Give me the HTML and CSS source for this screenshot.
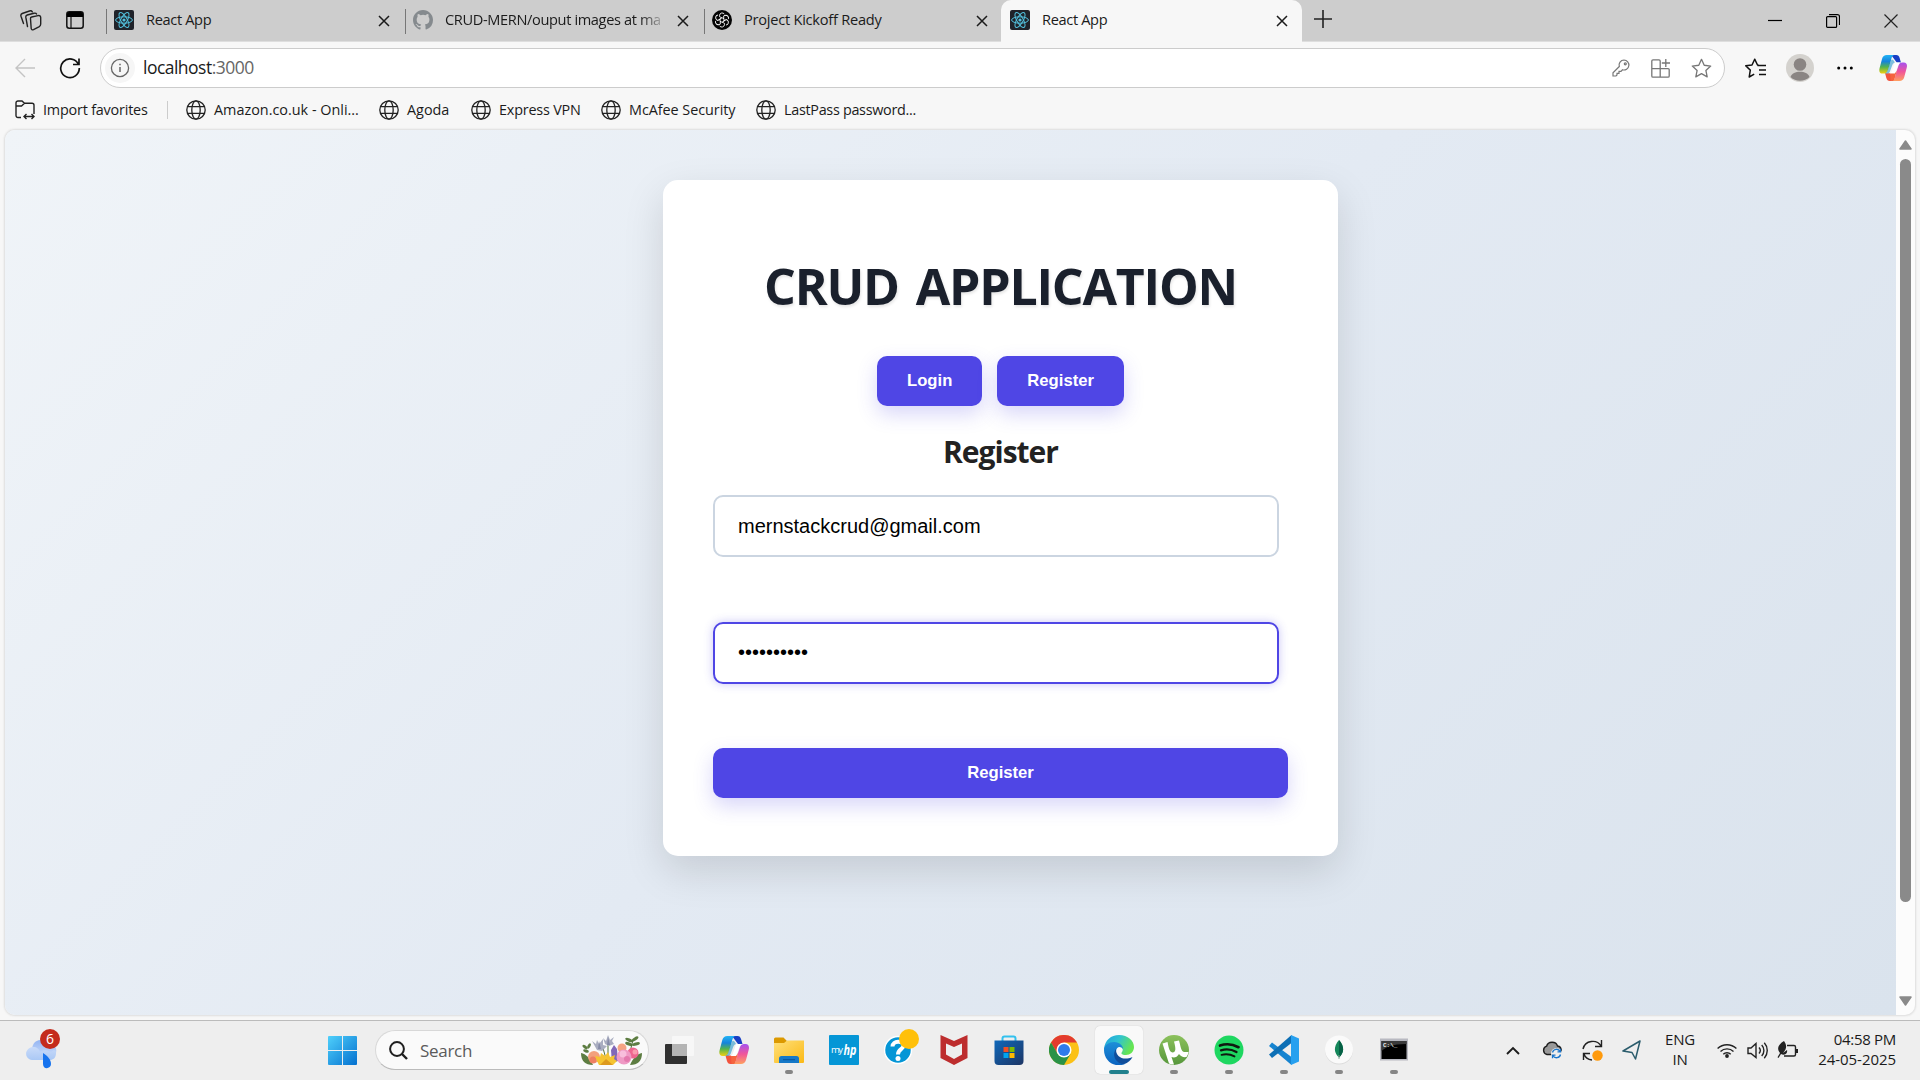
FILE: index.html
```html
<!DOCTYPE html>
<html lang="en">
<head>
<meta charset="utf-8">
<title>React App</title>
<link rel="stylesheet" href="styles.css">
</head>
<body>
<svg class="defs" width="0" height="0">
  <defs>
    <linearGradient id="cpA" x1="0" y1="0" x2="0" y2="1"><stop offset="0" stop-color="#22b4f5"/><stop offset=".35" stop-color="#1583dc"/><stop offset=".65" stop-color="#53b44c"/><stop offset="1" stop-color="#f5cf10"/></linearGradient>
    <linearGradient id="cpB" x1="0" y1="0" x2="0" y2="1"><stop offset="0" stop-color="#a550f0"/><stop offset=".5" stop-color="#f0559a"/><stop offset="1" stop-color="#ffa060"/></linearGradient>
    <linearGradient id="win" gradientUnits="userSpaceOnUse" x1="0" y1="0" x2="29" y2="29"><stop offset="0" stop-color="#4fd0fb"/><stop offset="1" stop-color="#0470cf"/></linearGradient>
    <linearGradient id="fold" x1="0" y1="0" x2="1" y2="1"><stop offset="0" stop-color="#ffe07a"/><stop offset="1" stop-color="#fbb915"/></linearGradient>
    <linearGradient id="store" x1="0" y1="0" x2="1" y2="1"><stop offset="0" stop-color="#0f68ba"/><stop offset="1" stop-color="#1d3564"/></linearGradient>
    <linearGradient id="edA" x1="0" y1="0" x2="1" y2=".4"><stop offset="0" stop-color="#1f9fe0"/><stop offset=".5" stop-color="#30c3d0"/><stop offset="1" stop-color="#66e552"/></linearGradient>
    <linearGradient id="edB" x1="0" y1="0" x2="0" y2="1"><stop offset="0" stop-color="#1d8fd8"/><stop offset="1" stop-color="#0b63c0"/></linearGradient>
    <linearGradient id="cloud" x1="0" y1="0" x2="0" y2="1"><stop offset="0" stop-color="#94b5f2"/><stop offset="1" stop-color="#cfe0fb"/></linearGradient>
    <linearGradient id="cloud2" x1="0" y1="0" x2="0" y2="1"><stop offset="0" stop-color="#c9dbf9"/><stop offset="1" stop-color="#aac8f5"/></linearGradient>
    <linearGradient id="ut" x1="0" y1="0" x2="0" y2="1"><stop offset="0" stop-color="#8cc15c"/><stop offset="1" stop-color="#57973c"/></linearGradient>
    <symbol id="react" viewBox="0 0 20 20"><rect width="20" height="20" rx="2" fill="#20232a"/><g fill="none" stroke="#53c1de" stroke-width="1"><ellipse cx="10" cy="10" rx="8.4" ry="3.2"/><ellipse cx="10" cy="10" rx="8.4" ry="3.2" transform="rotate(60 10 10)"/><ellipse cx="10" cy="10" rx="8.4" ry="3.2" transform="rotate(120 10 10)"/></g><circle cx="10" cy="10" r="1.6" fill="#53c1de"/></symbol>
    <symbol id="x" viewBox="0 0 12 12"><path d="M1 1l10 10M11 1L1 11" fill="none" stroke="#1b1b1b" stroke-width="1.5"/></symbol>
    <symbol id="globe" viewBox="0 0 20 20"><g fill="none" stroke="#222" stroke-width="1.3"><circle cx="10" cy="10" r="9.2"/><ellipse cx="10" cy="10" rx="4.2" ry="9.2"/><path d="M1.5 6.6h17M1.5 13.4h17"/></g></symbol>
    <symbol id="copilot" viewBox="0 0 30 28"><path d="M13 0h5.500c2 0 3 1 3.700 3.500L23.500 8H19z" fill="#183fc4"/><path d="M17 28h-5.500c-2 0-3-1-3.700-3.500L6.500 19.500H12z" fill="#f2533d"/><path d="M8 0h8.500c-2 0-2.800 1.600-3.400 3.500L11 11l-2 6c-.8 2-2 3-4 3H3.500C.3 20-.5 17.300.3 14.200L3 4C3.800 1.200 5.500 0 8 0z" transform="translate(.3 0)" fill="url(#cpA)"/><path d="M11 11l1.500-4C13.700 3.500 15 4.500 17 8c-1.500.4-2.500 1.800-3.200 4l-2 5.500c-.6 1.600-1.500 2.400-3 2.500H5c2 0 3.200-1 4-3z" fill="#1a91c8" opacity=".55"/><path d="M22 28h-8.500c2 0 2.800-1.600 3.400-3.500L19 17l2-6c.8-2 2-3 4-3h1.500c3.200 0 4 2.700 3.200 5.800L27 24c-.8 2.800-2.500 4-5 4z" fill="url(#cpB)"/><path d="M17.500 8H24c-2 0-3 1.300-3.800 3.500L17.500 19l-1 1H11c1.500 0 2.300-1 3-3l2-5.500C16.700 9.200 16.500 8.500 17.500 8z" fill="#fff"/><path d="M12 20h5l2-3-2 7.500c-.6 1.900-1.400 3.500-3.400 3.500-2 0-1-5-1.600-8z" fill="#f5643f"/></symbol>
  </defs>
</svg>
<div class="screen">
  <header class="tabbar">
    <div class="tab-tools">
      <svg width="22" height="21" viewBox="0 0 22 21"><g fill="none" stroke="#222" stroke-width="1.400" stroke-linejoin="round" stroke-linecap="round"><path d="M10.500 8.700Q10.300 7.300 11.700 7L18 5.600Q20.600 5.200 20.700 7.500V14Q20.700 15.700 19.300 16.600L13.500 19.600Q11.500 20.400 11.200 18.500z"/><path d="M7.500 16.500L5.800 7.200Q5.600 5.500 7.200 5L14 3.200Q16 2.800 16.600 4M3.500 13.500L1 6.200Q.4 4.200 2.200 3.500L9.500 1Q11.500.4 12.300 1.800"/></g></svg>
      <svg width="18" height="18" viewBox="0 0 18 18"><rect x=".8" y=".8" width="16.400" height="16.400" rx="2.500" fill="none" stroke="#111" stroke-width="1.500"/><path d="M1 6V3a2 2 0 012-2h12a2 2 0 012 2v3z" fill="#000"/><path d="M5 6v11" stroke="#111" stroke-width="1.200"/></svg>
    </div>
    <div class="tab"><svg class="fav"><use href="#react"/></svg><span class="tab-title">React App</span><svg class="close"><use href="#x"/></svg></div>
    <div class="tab"><svg class="fav" viewBox="0 0 16 16"><path fill="#858a8e" d="M8 0C3.580 0 0 3.580 0 8c0 3.540 2.290 6.530 5.470 7.590.4.070.55-.17.55-.38v-1.490c-2.010.37-2.530-.49-2.690-.94-.09-.23-.48-.94-.82-1.130-.28-.15-.68-.52-.01-.53.63-.01 1.080.58 1.230.82.720 1.210 1.870.87 2.330.66.070-.52.28-.87.510-1.070-1.780-.2-3.640-.89-3.640-3.950 0-.87.310-1.590.820-2.150-.08-.2-.36-1.020.08-2.120 0 0 .67-.21 2.200.82a7.600 7.600 0 014 0c1.530-1.040 2.200-.82 2.200-.82.440 1.100.160 1.920.080 2.120.510.560.820 1.270.820 2.150 0 3.070-1.870 3.750-3.650 3.950.290.250.540.730.540 1.480v2.190c0 .210.150.460.550.380A8.010 8.010 0 0016 8c0-4.420-3.580-8-8-8z"/></svg><span class="tab-title fade">CRUD-MERN/ouput images at ma</span><svg class="close"><use href="#x"/></svg></div>
    <div class="tab last"><svg class="fav" viewBox="0 0 20 20"><circle cx="10" cy="10" r="10" fill="#050505"/><g fill="none" stroke="#fff" stroke-width=".9"><g id="knot"><path id="k" d="M10 8L7.500 6.600V5.300a2.700 2.700 0 014.800-1.300"/><use href="#k" transform="rotate(60 10 10)"/><use href="#k" transform="rotate(120 10 10)"/></g><use href="#knot" transform="rotate(180 10 10)"/><path d="M10 7.700l2 1.150v2.300l-2 1.150-2-1.150v-2.300z"/></g></svg><span class="tab-title">Project Kickoff Ready</span><svg class="close"><use href="#x"/></svg></div>
    <div class="tab active"><svg class="fav"><use href="#react"/></svg><span class="tab-title">React App</span><svg class="close"><use href="#x"/></svg></div>
    <svg class="plus" width="18" height="18" viewBox="0 0 18 18"><path d="M9 0v18M0 9h18" stroke="#222" stroke-width="1.600"/></svg>
    <div class="window-controls">
      <svg width="14" height="14" viewBox="0 0 14 14"><path d="M0 6.500h14" stroke="#000" stroke-width="1.200"/></svg>
      <svg width="14" height="14" viewBox="0 0 14 14"><path d="M.6 3.600a1 1 0 011-1h8a1 1 0 011 1v8.800a1 1 0 01-1 1h-8a1 1 0 01-1-1zM3 .7h8.500a2 2 0 012 2V11" fill="none" stroke="#000" stroke-width="1.200"/></svg>
      <svg width="14" height="14" viewBox="0 0 14 14"><path d="M.5.5l13 13M13.500.5l-13 13" stroke="#222" stroke-width="1.200"/></svg>
    </div>
  </header>
  <nav class="toolbar">
    <svg class="back" width="20" height="20" viewBox="0 0 20 20"><path d="M20 10H1M10 1l-9 9 9 9" fill="none" stroke="#c4c4c4" stroke-width="1.400"/></svg>
    <svg class="reload" width="22" height="22" viewBox="0 0 22 22"><path d="M19.500 7.500A9.300 9.300 0 1020.300 11M20 1.500v6h-6" fill="none" stroke="#111" stroke-width="1.700"/></svg>
    <div class="address">
      <span class="info"><svg width="20" height="20" viewBox="0 0 20 20"><circle cx="10" cy="10" r="8.600" fill="none" stroke="#666" stroke-width="1.300"/><path d="M10 9v5M10 5.700v1.600" stroke="#666" stroke-width="1.500"/></svg></span>
      <span class="url">localhost<span class="port">:3000</span></span>
      <div class="address-icons">
        <svg width="18" height="18" viewBox="0 0 18 18" fill="none" stroke="#777" stroke-width="1.200"><path d="M12 1a5 5 0 11-1.500 9.800L9 12.300H7v2H5V16l-1 1H1v-3.200l6.300-6.300A5 5 0 0112 1z"/><circle cx="13.300" cy="4.800" r="1"/></svg>
        <svg width="19" height="19" viewBox="0 0 19 19" fill="none" stroke="#777" stroke-width="1.300"><path d="M9 18.200H2a1.200 1.200 0 01-1.200-1.200V2A1.200 1.200 0 012 .8h6A1.200 1.200 0 019.200 2v16.200H17a1.200 1.200 0 001.200-1.200v-6A1.200 1.200 0 0017 9.600H.8M14.800 0v8M10.800 4H19"/></svg>
        <svg width="21" height="21" viewBox="0 0 24 24" fill="none" stroke="#777" stroke-width="1.500" stroke-linejoin="round"><path d="M12 1.500l3.100 6.800 7.400.9-5.500 5 1.500 7.300-6.500-3.700-6.500 3.700L7 14.200l-5.500-5 7.400-.9z"/></svg>
      </div>
    </div>
    <div class="browser-icons">
      <svg width="21" height="21" viewBox="0 0 21 21" fill="none" stroke="#111" stroke-width="1.500" stroke-linejoin="round"><path d="M13.500 7h-1L9.700 1.200 7 7l-6.300.8 4.600 4.300L4.200 19l5-2.800M12.500 7.500H21M14 12h7M14 16.500h7"/></svg>
      <svg width="28" height="28" viewBox="0 0 28 28"><circle cx="14" cy="14" r="14" fill="#d4d2ce"/><circle cx="14" cy="10.500" r="6.300" fill="#8a8583"/><path d="M4.500 23c2-7 17-7 19 0a14 14 0 01-19 0z" fill="#8a8583"/></svg>
      <svg width="16" height="4" viewBox="0 0 16 4"><circle cx="1.700" cy="2" r="1.500"/><circle cx="8" cy="2" r="1.500"/><circle cx="14.300" cy="2" r="1.500"/></svg>
      <svg width="28" height="28"><use href="#copilot"/></svg>
    </div>
  </nav>
  <nav class="bookmarks">
    <a class="bm import"><svg width="20" height="20" viewBox="0 0 20 20" fill="none" stroke="#222" stroke-width="1.400"><path d="M6 17.500H3A2 2 0 011 15.500V3a2 2 0 012-2h4l2.500 2.300H17a2 2 0 012 2V14M1 6h5.500l3-2.700M9 16.500h10M11.500 14L9 16.500l2.500 2.500M16.500 14l2.500 2.500-2.500 2.500"/></svg><span>Import favorites</span></a>
    <a class="bm amazon"><svg width="20" height="20"><use href="#globe"/></svg><span>Amazon.co.uk - Onli...</span></a>
    <a class="bm agoda"><svg width="20" height="20"><use href="#globe"/></svg><span>Agoda</span></a>
    <a class="bm express"><svg width="20" height="20"><use href="#globe"/></svg><span>Express VPN</span></a>
    <a class="bm mcafee"><svg width="20" height="20"><use href="#globe"/></svg><span>McAfee Security</span></a>
    <a class="bm lastpass"><svg width="20" height="20"><use href="#globe"/></svg><span>LastPass password...</span></a>
  </nav>
  <div class="viewport">
    <main class="page">
      <section class="card">
        <h1>CRUD APPLICATION</h1>
        <div class="switch"><button class="btn">Login</button><button class="btn">Register</button></div>
        <h2>Register</h2>
        <div class="field">mernstackcrud@gmail.com</div>
        <div class="field focused">••••••••••</div>
        <button class="btn wide">Register</button>
      </section>
    </main>
    <div class="scrollbar">
      <svg width="13" height="10" viewBox="0 0 13 10"><path d="M6.500 1L12 9H1z" fill="#8a8a8a" stroke="#8a8a8a" stroke-width="1.500" stroke-linejoin="round"/></svg>
      <div class="thumb"></div>
      <svg width="13" height="10" viewBox="0 0 13 10"><path d="M6.500 9L12 1H1z" fill="#8a8a8a" stroke="#8a8a8a" stroke-width="1.500" stroke-linejoin="round"/></svg>
    </div>
  </div>
  <footer class="taskbar">
    <div class="weather"><svg width="36" height="40" viewBox="0 0 36 40"><path d="M8 26C4 12 14 8 19 11c4-1 7 3 7 5 5-1 6 4 5 7s-3 5-6 5z" fill="url(#cloud)"/><path d="M7 30c-8-1-8-12 1-13 4 0 6 2 7 5 4-3 9-2 11 1 1-3 5-4 5 0 0 5-3 7-6 7z" fill="url(#cloud2)"/><path d="M18 23c5 3 8 7 8 11 0 5-8 6-8 0z" fill="#1673ee"/></svg><span class="badge">6</span></div>
    <svg class="start" width="29" height="29" viewBox="0 0 29 29"><path d="M1 0h13v14H0V1a1 1 0 011-1zM15 0h13a1 1 0 011 1v13H15zM0 15h14v14H1a1 1 0 01-1-1zM15 15h14v13a1 1 0 01-1 1H15z" fill="url(#win)"/></svg>
    <div class="search">
      <svg width="19" height="19" viewBox="0 0 19 19"><circle cx="8" cy="8" r="6.900" fill="none" stroke="#1f1f1f" stroke-width="2"/><path d="M13 13l5 5" stroke="#1f1f1f" stroke-width="2.400"/></svg>
      <span>Search</span>
      <svg class="flowers" width="61" height="31" viewBox="0 0 61 31">
        <g fill="#5d7d42"><path d="M0 18c5 1 9 5 12 12C4 30 0 26 0 18zM61 18c-5 1-9 5-12 12 8 0 12-4 12-12z"/><ellipse cx="4" cy="12" rx="3" ry="1.500" transform="rotate(35 4 12)"/><ellipse cx="8" cy="11" rx="3" ry="1.400" transform="rotate(-60 8 11)"/><ellipse cx="5" cy="16" rx="3" ry="1.500" transform="rotate(20 5 16)"/><ellipse cx="48" cy="5" rx="4" ry="1.600" transform="rotate(25 48 5)"/><ellipse cx="54" cy="4" rx="4" ry="1.600" transform="rotate(-35 54 4)"/><ellipse cx="55" cy="9" rx="4" ry="1.600" transform="rotate(-15 55 9)"/><ellipse cx="48" cy="9" rx="4" ry="1.600" transform="rotate(20 48 9)"/></g>
        <path d="M22 13l3 11M27 9v12M52 5l-3 12" stroke="#51743c" fill="none"/>
        <path d="M11 6l4 3 1-4 2 4 4-5v6l4 1-5 5-5-1zM22 3l3 3 2-6 2 5 4-3-2 4 2 3-5 2-4-2z" fill="#a9adc0"/><path d="M17 14l1-8 2 8zM26 10l1-8 2 8z" fill="#858aa6"/>
        <circle cx="13" cy="22" r="6" fill="#f3a07c"/><circle cx="12" cy="25" r="3.500" fill="#ee7f62"/><circle cx="41" cy="13" r="4.500" fill="#f5a383"/><circle cx="52" cy="18" r="5.500" fill="#ef668f"/><circle cx="54" cy="17" r="2.500" fill="#fa9cae"/>
        <path d="M30 15l3-5 3 4 1 12-6 2z" fill="#8168b8"/><circle cx="43" cy="22" r="7.500" fill="#ef9ac5"/><circle cx="42" cy="19" r="3.500" fill="#f8bedc"/><circle cx="46" cy="24" r="3" fill="#e479ae"/>
        <path d="M14 21l5 1 1-4 4 3 3-4 2 5 5-2-1 4 3 2-4 4H18l-2-4z" fill="#f5c431"/><path d="M19 30l6-6 7 6z" fill="#dd9a1e"/>
      </svg>
    </div>
    <div class="apps">
      <div class="app"><svg viewBox="0 0 30 30"><rect x="1" y="9" width="22" height="20" rx="1" fill="#303030"/><rect x="8" y="1" width="22" height="20" rx="1" fill="#f7f7f7"/><path d="M8 9h15v12H8z" fill="#b4b4b4"/></svg></div>
      <div class="app"><svg viewBox="0 0 30 30"><use href="#copilot" y="1" width="30" height="28"/></svg></div>
      <div class="app run"><svg viewBox="0 0 30 30"><path d="M0 4a1.500 1.500 0 011.500-1.500h8L13 6h10v6H0z" fill="#dc9900"/><path d="M0 8h10l3-2.500h17V27a1 1 0 01-1 1H1a1 1 0 01-1-1z" fill="url(#fold)"/><path d="M5 28v-4.500a2.500 2.500 0 012.500-2.500h15a2.500 2.500 0 012.500 2.500V28z" fill="#1679c8"/><path d="M9 24.700h12" stroke="#08529a"/></svg></div>
      <div class="app"><svg viewBox="0 0 30 30"><rect width="30" height="30" rx="1" fill="#0596d6"/><text x="2" y="18" font-family="Open Sans,sans-serif" font-size="9.500" fill="#fff" textLength="12">my</text><text x="14.500" y="20" font-family="Open Sans,sans-serif" font-weight="700" font-style="italic" font-size="14" fill="#fff" textLength="13" lengthAdjust="spacingAndGlyphs">hp</text></svg></div>
      <div class="app"><svg viewBox="0 0 30 30"><circle cx="14" cy="15" r="13.500" fill="#0596d6" stroke="#fff" stroke-width="1.500"/><path d="M8.500 11.500c0-6 11-6.500 11-1 0 4-5.500 3.500-5.500 9" fill="none" stroke="#fff" stroke-width="4"/><circle cx="14" cy="23.500" r="2.500" fill="#fff"/></svg><span class="dot"></span></div>
      <div class="app"><svg viewBox="0 0 30 30"><path d="M1.500 0L15 6 28.500 0v23L15 30 1.500 23z" fill="#bd2d2e"/><path d="M7 8.500l8 3.500 8-3.500v11L15 24l-8-4.500z" fill="#eee"/></svg></div>
      <div class="app"><svg viewBox="0 0 30 30"><path d="M8.500 6V3.500a2 2 0 012-2h9a2 2 0 012 2V6" fill="none" stroke="#32c1ee" stroke-width="2"/><path d="M.5 5.500h29V26a4 4 0 01-4 4h-21a4 4 0 01-4-4z" fill="url(#store)"/><path d="M9.500 12h5v5h-5z" fill="#f25022"/><path d="M15.500 12h5v5h-5z" fill="#7fba00"/><path d="M9.500 18h5v5h-5z" fill="#00a4ef"/><path d="M15.500 18h5v5h-5z" fill="#ffb900"/></svg></div>
      <div class="app"><svg viewBox="0 0 30 30"><circle cx="15" cy="15" r="15" fill="#fbc116"/><path d="M2 7.500A15 15 0 0128 7.500H15l-6.500 11z" fill="#e33b2e"/><path d="M2 7.500l6.500 11L15 22l6.500-3L15 30A15 15 0 012 7.500z" fill="#2a9247"/><circle cx="15" cy="15" r="7.500" fill="#fff"/><circle cx="15" cy="15" r="6" fill="#2f7bea"/></svg></div>
      <div class="app current"><svg viewBox="0 0 30 30"><path d="M0 14C1 5 7 0 15 0c9 0 15 6 15 12 0 5-4 8-8 8-5 0-5-2-4-3 2-3 0-6-4-6-6 0-7 6-7 6z" fill="url(#edA)"/><path d="M0 15c0-5 5-8 10-8 6 0 9 4 9 7-2-3-7-3-7 3 0 7 5 12 10 11.500C11 34 0 26 0 15z" fill="url(#edB)"/><path d="M12 14c-5 7 1 15 8 15 4-1 7-4 8.500-7-9 4-17 0-16.500-8z" fill="#104e9b"/></svg></div>
      <div class="app run"><svg viewBox="0 0 30 30"><circle cx="15" cy="15" r="15" fill="url(#ut)"/><path d="M3.500 8.500L8.500 7c1 4 1.500 10 5 10.500 3.500 0 3.500-4 1.500-11L20 5.500c1.500 5 2 11 5 11.500h4.500c-.3 2-1 3.500-2 5-3 .5-6-.5-7.500-3-2 3.500-5 4-7.500 3l2.500 7.500c-2 .2-3.500-.2-5-1z" fill="#fff"/></svg></div>
      <div class="app run"><svg viewBox="0 0 30 30"><circle cx="15" cy="15" r="14.500" fill="#1ed760"/><g fill="none" stroke="#101810" stroke-linecap="round"><path d="M6 10.500c6-2 13-1.300 18.500 1.700" stroke-width="2.700"/><path d="M7 15.300c5.500-1.600 11-.8 15.500 1.700" stroke-width="2.300"/><path d="M7.500 19.800c5-1.200 9-.6 13 1.600" stroke-width="1.900"/></g></svg></div>
      <div class="app run"><svg viewBox="0 0 30 30"><path d="M0 11l3-3.500L22.500 22v8z" fill="#1684d0"/><path d="M0 19.500l3 3.500L22.500 8V0z" fill="#0d6fb5"/><path d="M22 0l8 3.500v23L22 30z" fill="#27a0ef"/></svg></div>
      <div class="app run"><svg viewBox="0 0 30 30"><circle cx="15" cy="15.500" r="14" fill="#dcdcdc"/><circle cx="15" cy="14.500" r="14" fill="#fafafa"/><path d="M15 5c6 7 5 13 0 17.500C10 18 9 12 15 5z" fill="#14875a"/><path d="M15 5c6 7 5 13 0 17.500z" fill="#076146"/><path d="M15 20v4" stroke="#8aa89a"/></svg></div>
      <div class="app run"><svg viewBox="0 0 30 30"><path d="M1 3.500h28v22H1z" fill="#b8b9c1"/><path d="M2.500 6h25v18h-25z" fill="#000"/><path d="M2.500 6h25v3c-15 0-20 3-25 7z" fill="#3a3a3a"/><text x="4" y="12" font-family="Liberation Mono,monospace" font-size="6" font-weight="700" fill="#eee">C:\_</text></svg></div>
    </div>
    <div class="tray">
      <svg class="t-chev" width="14" height="9" viewBox="0 0 14 9"><path d="M1 8l6-6 6 6" fill="none" stroke="#1c1c1c" stroke-width="1.900"/></svg>
      <svg class="t-cloud" width="20" height="18" viewBox="0 0 20 18"><path d="M5 13.500a4.300 4.300 0 01-.4-8.300C6 0 14 0 15.500 5c4 .5 4.500 5 2.500 7l-6 1.500z" fill="#999" stroke="#1c1c1c" stroke-width="1.400"/><circle cx="14.500" cy="12.500" r="5.500" fill="#eee"/><path d="M10.500 11.500a4 4 0 017.500-1M18.500 7.800v3h-3M18.500 13.500a4 4 0 01-7.500 1M10.500 17.200v-3h3" fill="none" stroke="#1b76cb" stroke-width="1.300"/></svg>
      <svg class="t-sync" width="21" height="21" viewBox="0 0 21 21"><path d="M1 9C3 0 15-1 19 6M19.500 0v6.500H13M1.500 20v-6.500H8M2 14c1 3 4 5.500 8 6" fill="none" stroke="#222" stroke-width="1.400"/><circle cx="15.500" cy="15.500" r="5.200" fill="#ff9a0c"/></svg>
      <svg class="t-nav" width="19" height="20" viewBox="0 0 19 20"><path d="M18 1L1 11l9 1.500L13.500 19z" fill="none" stroke="#2b5c6c" stroke-width="1.500" stroke-linejoin="round"/></svg>
      <div class="lang"><span>ENG</span><span>IN</span></div>
      <svg class="t-wifi" width="20" height="15" viewBox="0 0 20 15"><g fill="none" stroke="#222" stroke-width="1.400"><path d="M.6 5.500a13.500 13.500 0 0118.800 0M3.500 8.500a9.300 9.300 0 0113 0M6.300 11.300a5.300 5.300 0 017.400 0"/></g><circle cx="10" cy="13" r="1.900" fill="#222"/></svg>
      <svg class="t-vol" width="21" height="17" viewBox="0 0 21 17"><path d="M1 6h3l5-4.500v14L4 11.500H1zM12 5.500a4.500 4.500 0 010 6M14.700 3a8 8 0 010 11M17.300.8a11.500 11.500 0 010 15.400" fill="none" stroke="#222" stroke-width="1.400"/></svg>
      <svg class="t-bat" width="21" height="18" viewBox="0 0 21 18"><path d="M10 4.500h7A1.500 1.500 0 0118.500 6v7.500A1.500 1.500 0 0117 15H7" fill="none" stroke="#222" stroke-width="1.400"/><path d="M18.500 8H21v4h-2.500z" fill="#222"/><path d="M7 0c3 4 3 8-1 12l4-3c1 4-3 6-6 4l-2.500 4-1-.7L3 12C-1 7 2 3 7 0z" fill="#222"/></svg>
      <div class="clock"><span class="time">04:58 PM</span><span class="date">24-05-2025</span></div>
    </div>
  </footer>
</div>
</body>
</html>
```
FILE: styles.css
```css
* { box-sizing: border-box; }
body { margin: 0; font-family: "Open Sans", "Noto Sans", sans-serif; color: #1b1b1b; }
svg { display: block; flex: none; }
.defs { position: absolute; }
.screen { width: 1920px; height: 1080px; display: flex; flex-direction: column; overflow: hidden; background: #f7f7f7; }

.tabbar { height: 42px; flex: none; display: flex; align-items: center; background: #cdcdcd; box-shadow: inset 0 -1px #dedede; }
.tab-tools { width: 105px; padding: 0 0 2px 20px; display: flex; align-items: center; gap: 24px; flex: none; }
.tab { width: 299px; height: 42px; padding: 0 14px 2px 8px; display: flex; align-items: center; flex: none; border-left: 1px solid transparent; background: linear-gradient(#777, #777) 0 9px / 1px 25px no-repeat; }
.tab.last { width: 298px; padding-right: 13px; }
.fav { width: 20px; height: 20px; margin-right: 12px; }
.tab-title { font-size: 14.600px; letter-spacing: -.35px; white-space: nowrap; overflow: hidden; flex: 1; padding-bottom: 2px; }
.last .tab-title { letter-spacing: -.24px; }
.tab-title.fade { margin-right: 10px; letter-spacing: -.37px; -webkit-mask-image: linear-gradient(90deg, #000 88%, transparent); mask-image: linear-gradient(90deg, #000 88%, transparent); }
.close { width: 12px; height: 12px; margin-top: 1px; }
.tab.active { width: 301px; padding-left: 9px; background: #f7f7f7; border: 0; border-radius: 10px 10px 0 0; }
.plus { margin: 0 0 4px 12px; }
.window-controls { margin-left: auto; padding-right: 22px; display: flex; gap: 44px; }

.toolbar { height: 52px; flex: none; display: flex; align-items: center; padding-left: 15px; }
.reload { margin-left: 24px; }
.address { width: 1625px; height: 40px; margin-left: 19px; padding: 0 12px 0 4px; display: flex; align-items: center; background: #fff; border: 1px solid #ccc; border-radius: 20px; }
.info { width: 30px; height: 30px; border-radius: 50%; background: #f6f6f6; display: grid; place-items: center; }
.url { margin-left: 8px; padding-bottom: 2px; font-size: 17.500px; letter-spacing: -.52px; }
.port { color: #666; }
.address-icons { margin-left: auto; display: flex; align-items: center; gap: 21px; }
.browser-icons { display: flex; align-items: center; margin-left: 20px; gap: 32px; }
.browser-icons svg:nth-child(2) { margin-left: -12px; }
.browser-icons svg:nth-child(3) { margin-left: -9px; }
.browser-icons svg:nth-child(4) { margin-left: -6px; }

.bookmarks { height: 36px; flex: none; display: flex; align-items: center; padding: 0 0 4px 15px; font-size: 14.400px; letter-spacing: -.2px; }
.bm { display: flex; align-items: center; gap: 8px; flex: none; white-space: nowrap; }
.bm span { padding-bottom: 1px; }
.import { width: 153px; height: 18px; border-right: 1px solid #ccc; margin-right: 18px; }
.amazon { width: 193px; letter-spacing: 0; }
.agoda { width: 92px; letter-spacing: 0; }
.express { width: 130px; }
.mcafee { width: 155px; letter-spacing: -.05px; }
.lastpass { letter-spacing: -.3px; }

.viewport { height: 885px; margin: 0 5px; flex: none; display: flex; border-radius: 10px; overflow: hidden; background: #fcfcfc; box-shadow: 0 0 2px 1px #ddd; }
.page { width: 1891px; padding: 50px 0 0 658px; background: linear-gradient(135deg, #f0f4f8, #e3eaf3 50%, #dae3ed); }
.scrollbar { width: 19px; display: flex; flex-direction: column; align-items: center; padding: 10px 0 9px; }
.thumb { width: 11px; height: 743px; margin-top: 9px; margin-bottom: auto; border-radius: 6px; background: #8a8a8a; }

.card { width: 675px; height: 676px; padding: 0 50px; border-radius: 15px; background: #fff; box-shadow: 0 15px 40px rgba(0, 0, 0, .13); display: flex; flex-direction: column; }
h1 { margin: 71px 0 0; height: 70px; line-height: 70px; text-align: center; font-size: 50px; letter-spacing: -1.200px; word-spacing: 5px; color: #1a202c; text-shadow: 1px 2px 3px rgba(0, 0, 0, .1); white-space: nowrap; }
.switch { display: flex; justify-content: center; gap: 15px; margin-top: 35px; }
.btn { height: 50px; padding: 0 30px 1px; border: 0; border-radius: 10px; background: #4f46e5; color: #fff; font: bold 16.667px "Liberation Sans", Arial, sans-serif; box-shadow: 0 8px 20px rgba(79, 70, 229, .22); }
h2 { margin: 26px 0 0; height: 40px; line-height: 40px; text-align: center; font-size: 30px; letter-spacing: -1px; color: #222; }
.field { width: 566px; height: 62px; margin-top: 23px; padding: 0 23px; display: flex; align-items: center; flex: none; border: 2px solid #cbd5e1; border-radius: 10px; font: 20px "Liberation Sans", Arial, sans-serif; color: #000; }
.field.focused { margin-top: 65px; border-color: #4f46e5; box-shadow: 0 0 10px rgba(79, 70, 229, .3); padding-bottom: 2px; }
.wide { margin-top: 64px; }

.taskbar { height: 60px; margin-top: auto; flex: none; display: flex; align-items: center; background: #eee; box-shadow: inset 0 1px #bbb; }
.weather { position: relative; width: 328px; padding-left: 25px; flex: none; }
.badge { position: absolute; left: 40px; top: -1px; width: 20px; height: 20px; border-radius: 50%; background: #c42b1c; color: #fff; font-size: 14px; line-height: 19px; text-align: center; }
.search { width: 274px; height: 40px; margin-left: 18px; padding: 0 6px 0 13px; display: flex; align-items: center; flex: none; background: #fafafa; border: 1px solid #d8d8d8; border-bottom-color: #bbb; border-radius: 20px; font-size: 17px; color: #5b5b5b; }
.search span { margin-left: 12px; letter-spacing: -.3px; }
.flowers { margin-left: auto; }
.apps { display: flex; gap: 7px; margin-left: 6px; }
.app { position: relative; width: 48px; height: 48px; display: flex; justify-content: center; align-items: center; border-radius: 5px; }
.app > svg { width: 30px; height: 30px; }
.current { background: #f9f9f9; box-shadow: 0 0 1px #bbb; }
.run::after, .current::after { content: ""; position: absolute; bottom: 0; left: 20px; width: 8px; height: 4px; border-radius: 2px; background: #858585; }
.current::after { left: 14px; width: 20px; background: #20808d; }
.dot { position: absolute; left: 24px; top: 3px; width: 20px; height: 20px; border-radius: 50%; background: #ffc00a; }
.tray { margin-left: auto; padding-right: 24px; display: flex; align-items: center; }
.t-cloud { margin-left: 22px; }
.t-sync { margin-left: 20px; }
.t-nav { margin-left: 19px; }
.lang { width: 40px; margin-left: 19px; display: flex; flex-direction: column; align-items: center; font-size: 15px; line-height: 20px; letter-spacing: -.2px; }
.t-wifi { margin-left: 17px; }
.t-vol { margin-left: 10px; }
.t-bat { margin-left: 9px; }
.clock { width: 98px; display: flex; flex-direction: column; align-items: flex-end; font-size: 15px; line-height: 20px; white-space: nowrap; }
.time { letter-spacing: -.3px; }
.date { letter-spacing: -.05px; }
.lang, .clock { padding-bottom: 2px; }
```
